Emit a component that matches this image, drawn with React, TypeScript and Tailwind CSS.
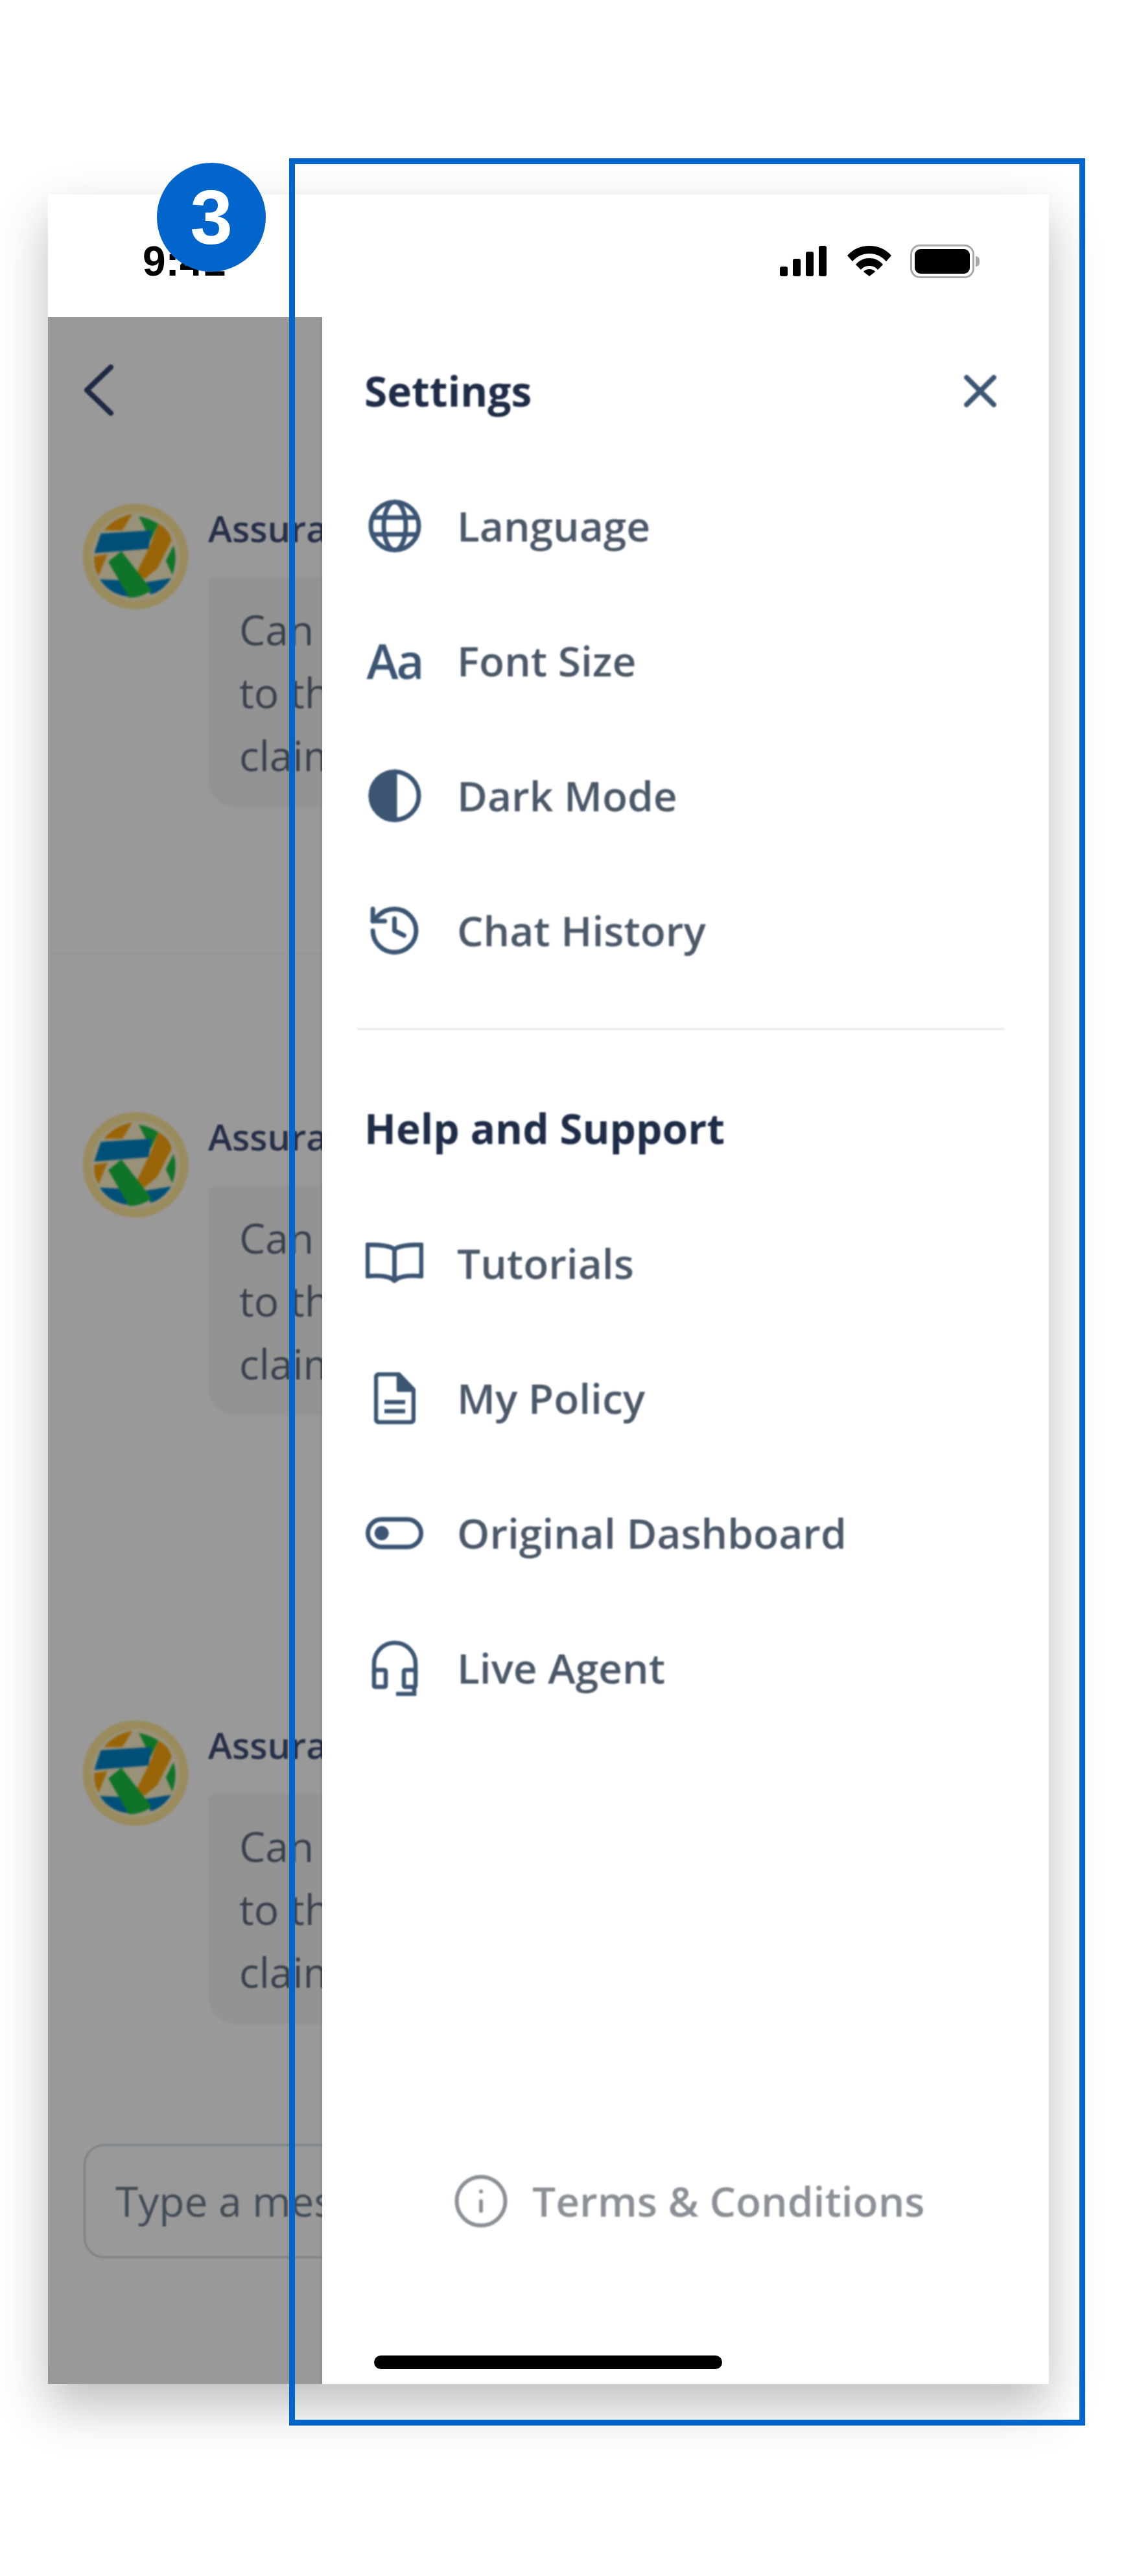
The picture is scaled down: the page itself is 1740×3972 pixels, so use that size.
import { ReactNode } from 'react';
import { History, Info, X } from 'lucide-react';

const ICON_STROKE = '#3b5573';

const GlobeIcon = () => (
  <svg width="82" height="82" viewBox="0 0 82 82" fill="none" stroke={ICON_STROKE} strokeWidth="7">
    <circle cx="41" cy="41" r="37" />
    <ellipse cx="41" cy="41" rx="17" ry="37" />
    <path d="M6 28H76M6 54H76" />
  </svg>
);

const FontIcon = () => (
  <span className="text-[74px] leading-none tracking-[-3px] text-[#3b5573] font-semibold">Aa</span>
);

const ContrastIcon = () => (
  <svg width="82" height="82" viewBox="0 0 82 82" fill="none" stroke={ICON_STROKE} strokeWidth="7">
    <circle cx="41" cy="41" r="37" />
    <path d="M41 4A37 37 0 0 0 41 78Z" fill={ICON_STROKE} />
  </svg>
);

const BookIcon = () => (
  <svg width="90" height="64" viewBox="0 0 90 64" fill="none" stroke={ICON_STROKE} strokeWidth="7" strokeLinejoin="round">
    <path d="M45 10C38 5 26 3 6 3H3V52C24 50 38 52 45 59C52 52 66 50 87 52V3H84C64 3 52 5 45 10Z" />
    <path d="M45 10V59" />
  </svg>
);

const DocIcon = () => (
  <svg width="64" height="80" viewBox="0 0 64 80" fill="none" stroke={ICON_STROKE} strokeWidth="6.5" strokeLinejoin="round">
    <path d="M8 3H38L61 27V72C61 75 59 77 56 77H8C5 77 3 75 3 72V8C3 5 5 3 8 3Z" />
    <path d="M38 4L60 27H38Z" fill={ICON_STROKE} />
    <path d="M16 46H48M16 60H48" />
  </svg>
);

const ToggleIcon = () => (
  <svg width="90" height="50" viewBox="0 0 90 50" fill="none" stroke={ICON_STROKE} strokeWidth="7">
    <rect x="3.5" y="3.5" width="83" height="43" rx="21.5" />
    <circle cx="25" cy="25" r="10" fill={ICON_STROKE} strokeWidth="2" />
  </svg>
);

const HeadsetIcon = () => (
  <svg width="72" height="86" viewBox="0 0 72 86" fill="none" stroke={ICON_STROKE} strokeWidth="6.5">
    <path d="M4 52V36A32 32 0 0 1 68 36V52" />
    <rect x="4" y="46" width="18" height="26" rx="2" />
    <rect x="50" y="46" width="18" height="26" rx="2" />
    <path d="M66 72V83H38" />
  </svg>
);

const SETTINGS_ITEMS: { label: string; icon: ReactNode }[] = [
  { label: 'Language', icon: <GlobeIcon /> },
  { label: 'Font Size', icon: <FontIcon /> },
  { label: 'Dark Mode', icon: <ContrastIcon /> },
  { label: 'Chat History', icon: <History size={108} strokeWidth={1.9} color={ICON_STROKE} /> },
];

const SUPPORT_ITEMS: { label: string; icon: ReactNode }[] = [
  { label: 'Tutorials', icon: <BookIcon /> },
  { label: 'My Policy', icon: <DocIcon /> },
  { label: 'Original Dashboard', icon: <ToggleIcon /> },
  { label: 'Live Agent', icon: <HeadsetIcon /> },
];

const MenuRow = ({ label, icon }: { label: string; icon: ReactNode }) => (
  <li className="flex h-[208px] items-center gap-[52px] pl-[67px]">
    <span className="flex h-[108px] w-[89px] items-center justify-center">{icon}</span>
    <span className="text-[64px] font-semibold text-[#4b5868]">{label}</span>
  </li>
);

const AssuranceLogo = () => (
  <svg width="164" height="164" viewBox="50 45 490 490" className="shrink-0 blur-[1px]">
    <circle cx="295" cy="290" r="243" fill="#ffe89a" />
    <circle cx="295" cy="290" r="205" fill="#fff3cc" />
    <path d="M150 170Q200 110 280 95L235 170Z" fill="#ffa70d" />
    <path d="M310 105Q360 115 400 140L365 215Z" fill="#19c043" />
    <path d="M400 140Q450 165 462 215L395 345L335 395L300 365L365 235Z" fill="#ffa70d" />
    <path d="M470 240Q490 300 465 375L435 310Z" fill="#19c043" />
    <path d="M105 290L165 280L125 380Q100 340 105 290Z" fill="#ffa70d" />
    <path d="M130 395L225 400L270 475Q180 470 130 395Z" fill="#0084c8" />
    <path d="M335 410L460 390Q420 450 365 465Z" fill="#0084c8" />
    <path d="M135 185L370 170L355 255L105 275Z" fill="#0084c8" />
    <path d="M170 315L230 265L370 445Q320 480 265 480Z" fill="#19c043" />
  </svg>
);

const ChatMessage = ({ divider }: { divider?: boolean }) => (
  <div className="relative flex h-[938px] items-start gap-[30px] pl-[53px]">
    <AssuranceLogo />
    <div className="w-[1200px]">
      <p className="text-[56px] font-semibold leading-[76px] text-[#3f4f78]">Assurance</p>
      <div className="mt-[38px] rounded-[12px] rounded-bl-[44px] bg-[#f5f5f5] pb-[32px] pl-[48px] pt-[32px] text-[64px] leading-[97px] text-[#606c80]">
        <p>Can you</p>
        <p>to the</p>
        <p>claim</p>
      </div>
    </div>
    {divider && <div className="absolute inset-x-0 top-[693px] h-[2px] bg-[#f8f8f8]" />}
  </div>
);

const StatusIcons = () => (
  <div className="flex items-center">
    <div className="flex h-[47px] items-end gap-[8px]">
      <span className="h-[15px] w-[12px] rounded-[3px] bg-black" />
      <span className="h-[27px] w-[12px] rounded-[3px] bg-black" />
      <span className="h-[38px] w-[12px] rounded-[3px] bg-black" />
      <span className="h-[47px] w-[12px] rounded-[3px] bg-black" />
    </div>
    <svg width="68" height="47" viewBox="0 0 68 47" className="ml-[32px]" fill="black">
      <path d="M34 0C47 0 59 5 68 15L60 24C53 16 44 12 34 12C24 12 15 16 8 24L0 15C9 5 21 0 34 0Z" />
      <path d="M34 19C42 19 49 22 55 29L47 37C44 33 39 31 34 31C29 31 24 33 21 37L13 29C19 22 26 19 34 19Z" />
      <path d="M34 36C38 36 41 37 43 40L34 47L25 40C27 37 30 36 34 36Z" />
    </svg>
    <div className="ml-[29px] flex items-center">
      <div className="h-[52px] w-[99px] rounded-[15px] border-[3px] border-[#a6a8ab] p-[4px]">
        <div className="h-full w-full rounded-[9px] bg-black" />
      </div>
      <span className="ml-[2px] h-[16px] w-[6px] rounded-r-full bg-[#a6a8ab]" />
    </div>
  </div>
);

const SettingsDrawer = () => (
  <aside className="absolute inset-y-0 right-0 flex w-[1121px] flex-col bg-white pt-[10px] shadow-[-2px_0_3px_rgba(0,0,0,0.08)]">
    <div className="blur-[0.8px]">
      <div className="flex h-[208px] items-center justify-between pl-[65px] pr-[64px]">
        <h2 className="text-[64px] font-bold text-[#1e2c47]">Settings</h2>
        <X size={84} strokeWidth={2.2} color={ICON_STROKE} />
      </div>
      <ul>
        {SETTINGS_ITEMS.map((item) => (
          <MenuRow key={item.label} {...item} />
        ))}
      </ul>
      <div className="ml-[53px] mt-[46px] h-[3px] w-[1000px] bg-[#e9e9ea]" />
      <h2 className="mt-[48px] flex h-[208px] items-center pl-[65px] text-[64px] font-bold text-[#1e2c47]">
        Help and Support
      </h2>
      <ul>
        {SUPPORT_ITEMS.map((item) => (
          <MenuRow key={item.label} {...item} />
        ))}
      </ul>
    </div>

    <div className="mt-auto">
      <div className="flex items-center gap-[34px] pl-[200px] blur-[0.8px]">
        <Info size={90} strokeWidth={1.6} color="#8b9096" />
        <span className="text-[64px] font-semibold text-[#8b9096]">Terms &amp; Conditions</span>
      </div>
      <div className="ml-[80px] mt-[190px] mb-[23px] h-[21px] w-[537px] rounded-full bg-black" />
    </div>
  </aside>
);

export default function App() {
  return (
    <div className="relative h-[3972px] w-[1740px] overflow-hidden bg-white pl-[74px] pt-[300px] font-['Open_Sans',sans-serif]">
      <div className="flex h-[3376px] w-[1544px] flex-col bg-white shadow-[0_34px_70px_rgba(50,55,60,0.32)]">
        {/* iOS status bar */}
        <header className="flex h-[189px] shrink-0 items-center justify-between pl-[146px] pr-[107px] pt-[16px] font-['Liberation_Sans',sans-serif]">
          <span className="text-[64px] font-bold leading-none text-black">9:41</span>
          <StatusIcons />
        </header>

        <div className="relative flex-1 overflow-hidden">
          <div className="h-full blur-[0.8px]">
            <div className="flex h-[228px] items-start border-b-2 border-[#f8f8f8] pl-[57px] pt-[74px]">
              <svg width="43" height="77" viewBox="0 0 43 77" fill="none" stroke="#32466f" strokeWidth="8" strokeLinecap="round" strokeLinejoin="round" className="overflow-visible">
                <path d="M40 3L3 38.5L40 74" />
              </svg>
            </div>
            <div className="pt-[59px]">
              <ChatMessage divider />
              <ChatMessage />
              <ChatMessage />
            </div>
            <div className="ml-[55px] mt-[-284px] flex h-[176px] w-[1420px] items-center rounded-[32px] border-[3px] border-[#d0d9e1] pl-[46px] text-[64px] text-[#6f7e8e]">
              Type a message
            </div>
          </div>

          {/* dimmed backdrop + drawer */}
          <div className="absolute inset-0 bg-black/40" />
          <SettingsDrawer />
        </div>
      </div>

      {/* annotation */}
      <div className="absolute left-[446px] top-[244px] h-[3496px] w-[1228px] border-[9px] border-[#0265cb]" />
      <div className="absolute left-[242px] top-[251px] flex h-[168px] w-[168px] items-center justify-center rounded-full bg-[#0265cb] font-['Liberation_Sans',sans-serif] text-[118px] font-bold leading-none text-white">
        3
      </div>
    </div>
  );
}
